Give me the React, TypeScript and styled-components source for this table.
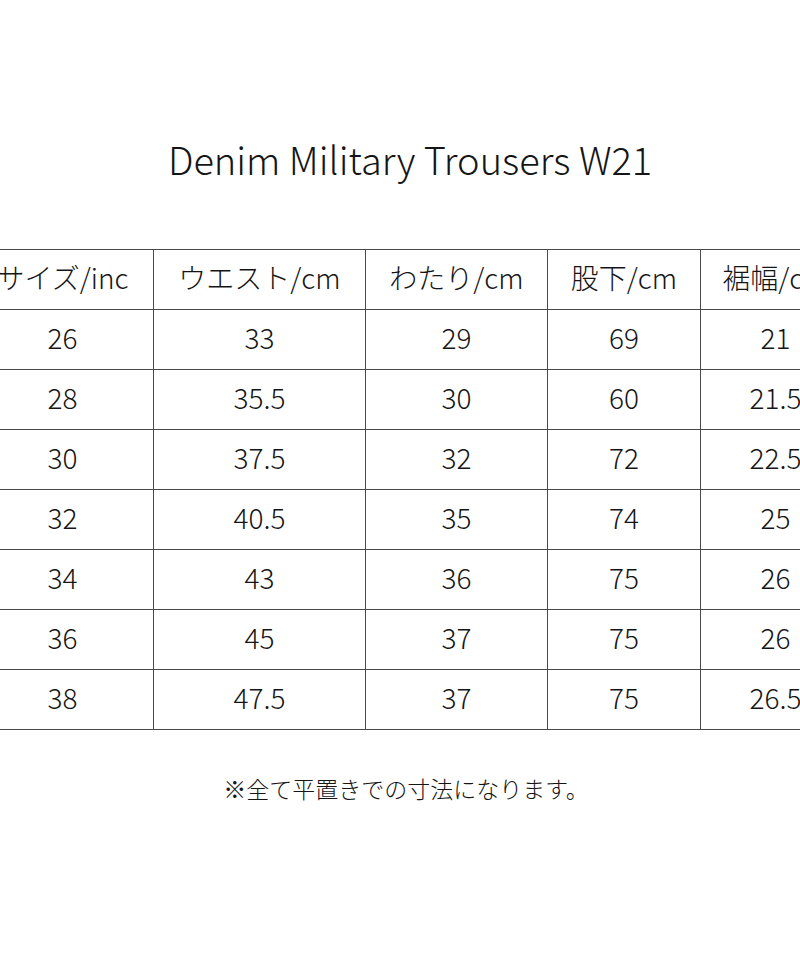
import styled, { createGlobalStyle } from "styled-components";

const GlobalStyle = createGlobalStyle`
   html, body {
      margin: 0;
      padding: 0;
      background: #ffffff;
   }
   body {
      font-family: "Noto Sans CJK JP", "Noto Sans", sans-serif;
      color: #151515;
   }
`;

const headers = ["サイズ/inc", "ウエスト/cm", "わたり/cm", "股下/cm", "裾幅/cm"];
const widths = [182, 212, 182, 153, 150];

const rows = [
   ["26", "33", "29", "69", "21"],
   ["28", "35.5", "30", "60", "21.5"],
   ["30", "37.5", "32", "72", "22.5"],
   ["32", "40.5", "35", "74", "25"],
   ["34", "43", "36", "75", "26"],
   ["36", "45", "37", "75", "26"],
   ["38", "47.5", "37", "75", "26.5"],
];

export default function App() {
   return (
      <>
         <GlobalStyle />
         <Page>
            <Title>Denim Military Trousers W21</Title>
            <TableClip>
               <SizeTable>
                  <colgroup>
                     {widths.map((w, i) => (
                        <col key={i} style={{ width: w }} />
                     ))}
                  </colgroup>
                  <thead>
                     <tr>
                        {headers.map((h) => (
                           <HeadCell key={h}>{h}</HeadCell>
                        ))}
                     </tr>
                  </thead>
                  <tbody>
                     {rows.map((r, i) => (
                        <tr key={i}>
                           {r.map((v, j) => (
                              <Cell key={j}>{v}</Cell>
                           ))}
                        </tr>
                     ))}
                  </tbody>
               </SizeTable>
            </TableClip>
            <Note>※全て平置きでの寸法になります。</Note>
         </Page>
      </>
   );
}

const Page = styled.div`
   width: 800px;
   height: 960px;
   overflow: hidden;
   display: flex;
   flex-direction: column;
   align-items: center;
`;

const Title = styled.h1`
   margin: 131px 0 0 20px;
   font-size: 38px;
   font-weight: 300;
   line-height: 56px;
`;

const TableClip = styled.div`
   width: 800px;
   margin-top: 62px;
   overflow: hidden;
`;

const SizeTable = styled.table`
   margin-left: -29px;
   border-collapse: collapse;
   table-layout: fixed;
   width: 879px;
`;

const Cell = styled.td`
   box-sizing: border-box;
   height: 60px;
   padding: 0 0 5px;
   border: 1px solid #4a4a4a;
   text-align: center;
   vertical-align: middle;
   font-size: 28px;
   font-weight: 300;
   white-space: nowrap;
`;

const HeadCell = styled(Cell).attrs({ as: "th" })`
   font-weight: 300;
`;

const Note = styled.p`
   margin: 42px 0 0 12px;
   font-size: 23px;
   font-weight: 300;
   line-height: 32px;
`;
